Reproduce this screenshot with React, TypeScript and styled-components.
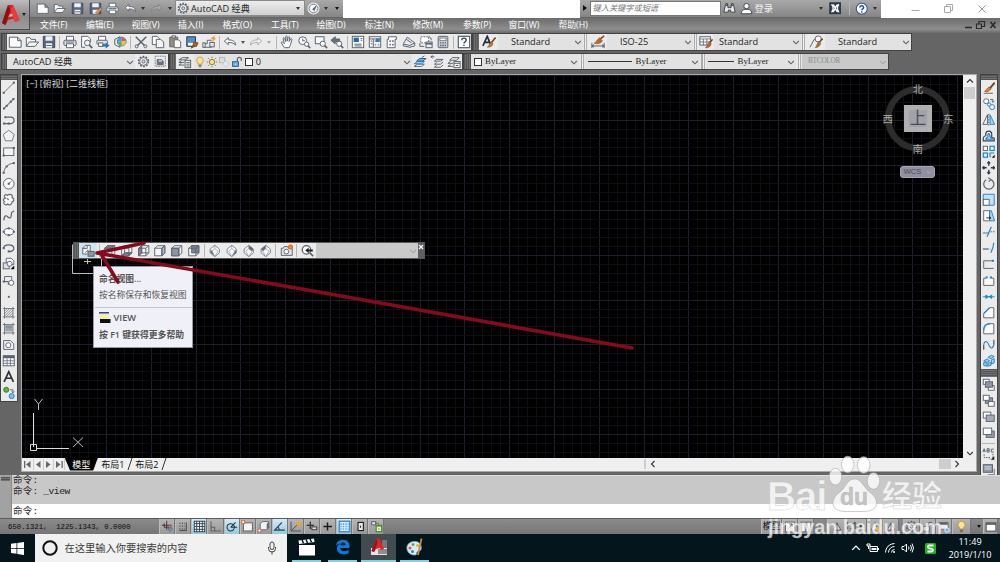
import React from "react";
import styled, { createGlobalStyle, css } from "styled-components";

const UI = `"Open Sans", "Noto Sans CJK SC", sans-serif`;
const INK = "#59626e";
const BLUE = "#2583c5";
const SKY = "#a9d4ee";

const Global = createGlobalStyle`
  * { box-sizing: border-box; }
  html, body { margin: 0; padding: 0; width: 1000px; height: 562px; overflow: hidden; background: #656565; }
  body { font-family: ${UI}; font-size: 9px; line-height: 1; color: #222; }
  svg { display: block; flex: none; }
`;

/* ---------- icons ---------- */

const cube = (face: string) => (
  <>
    <path d="M2 5 5.500 2H14v8.500L10.500 14H2z" fill="#f4f5f7" stroke={INK} />
    {face === "top" && <path d="M2 5 5.500 2H14l-3.500 3z" fill="#7b8490" />}
    {face === "bottom" && <path d="M2 14 5.500 10.500H14L10.500 14z" fill="#7b8490" />}
    {face === "left" && <path d="M2 5 5.500 2v8.500L2 14z" fill="#7b8490" />}
    {face === "right" && <path d="M10.500 5 14 2v8.500L10.500 14z" fill="#b4bac1" />}
    {face === "front" && <path d="M2 5h8.500v9H2z" fill="#8b949f" />}
    {face === "back" && <path d="M5.500 2H14v8.500H5.500z" fill="#7b8490" />}
    <path d="M2 5h8.500v9M10.500 5 14 2" />
    {(face === "bottom" || face === "left") && <path d="M5.500 2v8.500H14M5.500 10.500 2 14" />}
  </>
);

const iso = (d: string) => (
  <>
    <path d="M8 1.500 13.500 6v4.500L8 15 2.500 10.500V6z" fill="#f7f7f8" stroke="#7b838d" />
    <path d={d} fill="#5f6975" stroke="none" />
    <path d="M8 1.500v4L4.500 8.500 8 15l4-6.500L8 5.500" stroke="#8b939c" strokeWidth=".8" />
  </>
);

const node = (x: number, y: number, c = INK) => <rect x={x - 1.2} y={y - 1.2} width="2.4" height="2.4" fill={c} stroke="none" />;

const ICONS: Record<string, React.ReactNode> = {
  new: <path d="M1.500 2.500H11l4 4v7.500H1.500zM11 2.500v4h4" fill="#fafafa" />,
  open: <path d="M1.500 13V3h4l1.500 2h5v3M1.500 13 5 8h10.500l-4 5z" fill="#f4f6f8" />,
  save: <><path d="M1.500 1.500h13v13h-13z" fill="#58677d" stroke="#3b475a" /><path d="M4 1.500h8v5H4zM4.500 9.500h7v5h-7z" fill="#eef1f4" stroke="none" /><path d="M5 12h6" /></>,
  saveas: <><path d="M1.500 1.500h13v13h-13z" fill="#58677d" stroke="#3b475a" /><path d="M4 1.500h8v5H4zM4.500 9.500h7v5h-7z" fill="#eef1f4" stroke="none" /><path d="m8 13 6-6 2 2-5.500 5.500z" fill="#e59b3c" stroke="#8a5a20" strokeWidth=".7" /></>,
  print: <><path d="M4 6V1.500h8V6" fill="#fff" /><rect x="1" y="6" width="14" height="6" rx="1.500" fill="#dfe2e6" /><path d="M4 10h8v4.500H4z" fill="#fff" /><path d="M3 8h10" strokeWidth="1" /></>,
  preview: <><path d="M3 14V1.500h7l3 3V8M3 14h4" fill="#fff" /><circle cx="9.500" cy="9" r="3.200" fill="#eef4f8" /><path d="m12 11.500 3 3.500" strokeWidth="2" /></>,
  publish: <><path d="M3 6V1.500h8V6" fill="#fff" /><rect x="1" y="6" width="12" height="4.500" rx="1" fill="#dfe2e6" /><path d="M3 9h5v4H3z" fill="#fff" /><path d="M7 11h4V8.500l4.500 3.500-4.500 3.500V13H7z" fill="#1f73b8" stroke="none" /></>,
  dwf: <><path d="M2 5 8 2v12l-6-3z" fill="#e8ecf0" /><circle cx="10" cy="7.500" r="5" fill="#f5f5f5" stroke={INK} /><path d="M10 7.500V3a4.500 4.500 0 0 1 4.500 4.500z" fill="#e9564a" stroke="none" /><path d="M10 7.500h4.500A4.500 4.500 0 0 1 10 12z" fill="#f3c13b" stroke="none" /><path d="M10 7.500V12a4.500 4.500 0 0 1-4.500-4.500z" fill="#4bb35b" stroke="none" /><path d="M10 7.500H5.500A4.500 4.500 0 0 1 10 3z" fill="#3f9bd8" stroke="none" /></>,
  cut: <><path d="M2 2 12 12M14 2 4 12" strokeWidth="1.700" /><circle cx="3" cy="13" r="1.700" /><circle cx="13" cy="13" r="1.700" /></>,
  copy: <><path d="M1.500 1.500H7l2.500 2.500v7h-8z" fill="#fff" /><path d="M6 5h5l3.500 3v6.500H6z" fill="#f5f5f5" /></>,
  paste: <><path d="M2 2.500h9v11H2z" fill="#9b8d7b" /><path d="M4.500 1h4v2.500h-4z" fill="#ddd" /><path d="M7 5.500h5l2.500 2.500v6.500H7z" fill="#fafafa" /></>,
  match: <><path d="M2 2h10v11H2z" fill="#4f8fc9" stroke="#335" /><path d="M3.500 9h7v3h-7z" fill="#fff" stroke="none" /><path d="M10 8l5 1-2 4-4-1zM9 12l-2 3 4-2" fill="#b5622b" stroke="#8d4a1d" /></>,
  block: <><path d="M2 10h4V6h5M2 10v4h9v-3" /><rect x="1" y="9" width="2.500" height="5" fill="#fff" /><rect x="9" y="8.500" width="5" height="5" fill="#e8e8e8" /><path d="m14.500 1-4 3 3 .5-2 3 4-3.500-2.500-.5z" fill="#f2a530" stroke="#d98a1b" strokeWidth=".6" /></>,
  undo: <path d="M1.500 7 6 3v2.500c5 0 8 1.500 8.500 6C12 9 9.500 8.500 6 8.500V11z" fill="#f6f7f8" />,
  redo: <path d="M14.500 7 10 3v2.500c-5 0-8 1.500-8.500 6C4 9 6.500 8.500 10 8.500V11z" fill="#f1f1f1" stroke="#a4a8ad" />,
  titleRedo: <path d="M14.500 7 10 3v2.500c-5 0-8 1.500-8.500 6C4 9 6.500 8.500 10 8.500V11z" fill="#aaa" stroke="#7c7f83" />,
  pan: <path d="M5 14.500 1.500 9c-.5-1 1-1.500 2-.5L5 10 3.500 4c0-1.200 1.500-1.200 1.800 0L6.500 7.500V2c0-1.200 1.600-1.200 1.700 0v5L9.500 2.500c.5-1 1.800-.6 1.600.5l-.7 4.500 1.800-3c.8-.8 1.800-.2 1.500.8L12 11l-1.500 3.500z" fill="#fff" />,
  zoomrt: <><circle cx="6.500" cy="6.500" r="4.500" fill="#fff" /><path d="M6.500 4v2.500H9" /><circle cx="11" cy="10.500" r="2.500" fill="#fff" /><path d="m12.500 12 2.500 3" strokeWidth="1.800" /></>,
  zoomwin: <><rect x="1.500" y="2" width="10" height="8" fill="#f5f9fc" /><circle cx="10" cy="10" r="3" fill="#fff" /><path d="m12 12 3 3" strokeWidth="2" /></>,
  zoomprev: <><path d="M1 6 6 2v2.500h5v3H6V10z" fill="#66717d" /><circle cx="10.500" cy="10" r="3" fill="#fff" /><path d="m12.500 12 2.500 3" strokeWidth="1.800" /></>,
  props: <><rect x="1.500" y="1.500" width="13" height="13" fill="#fff" /><rect x="3" y="3" width="6" height="5" fill="#236aa5" stroke="none" /><path d="M4 10.500h8M4 12.500h8M11 4h2M11 6h2" /></>,
  dcenter: <><rect x="1.500" y="2" width="13" height="12" fill="#fff" /><path d="M1.500 4.500h13M6 4.500V14M3 7h2M3 10h2" /><path d="M7.500 6h2v2h-2zM11 6h2v2h-2zM7.500 10h2v2h-2zM11 10h2v2h-2z" fill="#8e99a5" stroke="none" /><rect x="9" y="4" width="4.500" height="4" fill="#3b79ad" stroke="none" /></>,
  palette: <><path d="M4 2h9v3h-1.500v9.500H2.500V5H4z" fill="#fff" /><path d="M5 6h2v2H5zM8 6h2v2H8zM5 10h2v2H5zM8 10h2v2H8z" fill="#778" stroke="none" /></>,
  sheet: <><path d="M1.500 10 6 2.500 10 5.500 14.500 9v3.500L9 14 1.500 12.500z" fill="#e8ebee" /><path d="M2 10.500 9 12l5.500-3M5 5l6 4" /></>,
  markup: <><rect x="2" y="2" width="9" height="7" strokeDasharray="2 1.200" fill="#fff" /><path d="M11 2c2 0 3 1.500 3 4M1 9v4h5" /><rect x="8" y="8" width="7" height="6.500" fill="#e7edf3" /><path d="M8 10h7" strokeWidth="1.800" /></>,
  calc: <><rect x="2.500" y="1.500" width="11" height="13" rx="1" fill="#cfd4da" /><rect x="4.500" y="3.500" width="7" height="3" fill="#fff" strokeWidth=".8" /><path d="M4.500 9h7M4.500 12h7" strokeDasharray="1.800 .9" strokeWidth="1.600" /></>,
  helpbox: <><rect x="1.500" y="1.500" width="13" height="13" fill="#fdfdfd" strokeWidth="1.400" /><path d="M5.500 6c0-3.300 5-3.300 5 0 0 1.800-2.500 1.800-2.500 3.800M8 11v1.700" stroke="#3a4350" strokeWidth="1.600" /></>,
  gear: <><circle cx="8" cy="8" r="6" strokeWidth="2" strokeDasharray="2.200 1.560" /><circle cx="8" cy="8" r="4.800" fill="#f4f4f4" /><circle cx="8" cy="8" r="2" fill="#d7d7d7" /></>,
  wsave: <><rect x="1.500" y="1.500" width="13" height="13" strokeDasharray="2 1" stroke="#6d747c" /><path d="M3.500 5h6l3 3v5h-9z" fill="#68717d" stroke="none" /><path d="M6 6h4v3H6z" fill="#b8bfc6" stroke="none" /></>,
  layers: <><path d="M1 5.500 5 3h7l-3.500 2.500zM1 8.500 4 6.500M1 8.500h6M1 11.500l3-2M1 11.500h6" /><rect x="8" y="6" width="6.500" height="8.500" fill="#e9edf0" /><path d="M9.500 8.500h4M9.500 10.500h4M9.500 12.500h4" strokeWidth="1" /></>,
  bulb: <><path d="M8 1.500a4.300 4.300 0 0 1 2.500 7.800V11h-5V9.300A4.300 4.300 0 0 1 8 1.500z" fill="#ffe58a" stroke="#b99437" /><path d="M6 12.500h4M6.500 14.300h3" stroke="#555" /></>,
  sun: <><circle cx="8" cy="8" r="3.500" fill="#ffe37a" stroke="#7d6a3a" /><path d="M8 1v2M8 13v2M1 8h2M13 8h2M3 3l1.500 1.500M11.500 11.500 13 13M3 13l1.500-1.500M11.500 4.500 13 3" stroke="#75684b" /></>,
  vpfreeze: <><rect x="2" y="2" width="7" height="7" stroke="#b0b0b0" fill="#ddd" /><circle cx="10.500" cy="10.500" r="3.500" stroke="#b4b4b4" strokeDasharray="1.500 1" fill="#e6e6e6" /></>,
  lock: <><rect x="2" y="7.500" width="8" height="6.500" fill="#5aa7dd" stroke="#2e5f86" /><path d="M8.500 7.500V4.300a2.600 2.600 0 0 1 5.200 0V6.500" strokeWidth="1.600" /><path d="M6 10v2" stroke="#fff" /></>,
  lay1: <><path d="M1.500 13 5 10.500h8L10 13z" fill="#fff" /><path d="M1.500 10 5 7.500h8L10 10z" fill={SKY} stroke={BLUE} /><path d="M4 7 7.500 4H15l-4 3z" fill="#6cb2e2" stroke="#265f8c" /><path d="m10 3 3-2" /></>,
  lay2: <><path d="M1 2h4M1 2l2-1.500M1 2l2 1.500" /><path d="M5 7 7.500 5H15l-3 2zM5 10.500l2.500-2M5 10.500h7l3-2.500M5 14l2.500-2M5 14h7l3-2.500" fill="none" /></>,
  lay3: <><path d="M3 6 6 3h8l-3 3zM1 9.500l3-2M1 9.500h6M1 13l3-2M1 13h6" /><rect x="8" y="7.500" width="7" height="7" fill="#f7f7f7" /><path d="M8 9.500h7M10 12h3" /></>,
  styleA: <><path d="m1 12.500 5-11 4.500 11M3 8.500h6" stroke="#26303c" strokeWidth="1.900" /><path d="m15.500 3-5 6" stroke="#7a4b25" strokeWidth="1.800" /><path d="m11 8 1.500 1.500c0 3-2.500 4.500-6.500 4.500 2.500-1.500 2.500-5 5-6z" fill="#c07a3c" stroke="#8b4d1f" strokeWidth=".6" /></>,
  styleDim: <><path d="M1 9v6M15 9v6M1 12.500h14M1 12.500l2.500-1.500M1 12.500 3.500 14M15 12.500 12.500 11M15 12.500 12.500 14" /><path d="m15 1-5 4" stroke="#7a4b25" strokeWidth="1.800" /><path d="m10 3 3 3.500c-1 3-5 4-9.500 3 2.500-1 3-4.500 6.500-6.500z" fill="#b86c33" stroke="#8b4d1f" strokeWidth=".6" /></>,
  styleTab: <><rect x="1" y="2" width="12" height="9.500" fill="#fff" /><path d="M1 4.500h12M1 8h12M5 4.500v7M9 4.500v7" strokeWidth=".9" /><path d="m15.500 5-3 3.500" stroke="#7a4b25" strokeWidth="1.800" /><path d="m12 7.500 2 2.500c-1 3.500-3.500 5-6.500 4.500 2-1.500 2-5 4.500-7z" fill="#b86c33" stroke="#8b4d1f" strokeWidth=".6" /></>,
  styleLead: <><path d="M1 14 6 5h3" /><circle cx="10.500" cy="4.500" r="3.500" fill="#fff" /><path d="m15.500 4-4 4.500" stroke="#7a4b25" strokeWidth="1.800" /><path d="m11.500 7 2 2.500c-1 3-3 5-6.500 5 2-1.500 2-5.500 4.500-7.500z" fill="#b86c33" stroke="#8b4d1f" strokeWidth=".6" /></>,
  compass: <><circle cx="8" cy="8" r="6.700" fill="#f3f5f7" stroke="#e2e6ea" strokeWidth="1.500" /><circle cx="8" cy="8" r="5.300" stroke="#6b747e" /><path d="m7 9 4-4-2 5.500z" fill={INK} /></>,
  binoc: <><path d="M3 4h3v3h4V4h3l2 8.500h-5.500V10h-3v2.500H1z" fill="#e9ebee" stroke="#333b46" /><path d="M3.500 2h2v2h-2zM10.500 2h2v2h-2z" fill="#d3d7db" stroke="#333b46" /></>,
  person: <><circle cx="8" cy="5" r="3.300" fill="#fff" stroke="#333b46" /><path d="M1.500 14.500c0-4 2.500-5 4.500-5.500h4c2 .5 4.500 1.500 4.500 5.500z" fill="#fff" stroke="#333b46" /></>,
  exch: <><rect x="1" y="1" width="14" height="14" fill="#2e3e50" stroke="#232f3d" /><path d="M3 3.500c3 0 3 9-0 9M13 3.500c-3 0-3 9 0 9M5 3.500c3 1 3 8 6 9M11 3.500c-3 1-3 8-6 9" stroke="#fff" strokeWidth="1.700" /></>,
  help: <><circle cx="8" cy="8" r="6.500" fill="#fff" stroke="#264f84" strokeWidth="1.200" /><path d="M5.800 6.500c0-3 4.400-2.800 4.400 0 0 1.500-2.200 1.700-2.200 3.300M8 11v1.600" stroke="#1d55a5" strokeWidth="1.800" /></>,

  line: <><path d="M2 14 14 2" strokeWidth="1" />{node(2, 14)}{node(14, 2)}</>,
  xline: <><path d="M1.500 14.500 14.500 1.500" strokeWidth="1.200" />{node(2.500, 13.500)}{node(13.500, 2.500)}{node(5.500, 10.500)}{node(10.500, 5.500)}</>,
  pline: <><path d="M3 12.500h7.500a3.800 3.800 0 0 0 0-7.600H5" strokeWidth="1.400" />{node(2.500, 12.500)}{node(4, 5)}{node(8, 12.500)}</>,
  polygon: <path d="m8 1.500 6.500 5L12 14H4L1.500 6.500z" fill="#f0f3f5" stroke="#717983" />,
  rect: <><rect x="2" y="3.500" width="12" height="9" fill="#f4f4f4" />{node(2, 12.500)}{node(14, 3.500)}</>,
  arc: <><path d="M2 14C2.500 8.500 7 3 14 2.500" />{node(2, 14)}{node(5.500, 6.500)}{node(14, 2.500)}</>,
  circle: <><circle cx="8" cy="8" r="6.300" fill="#f8f8f8" /><path d="m8 8 3-3" />{node(8, 8)}</>,
  revcloud: <path d="M4 6C1 3.500 4 .8 6.500 2.800 9 .5 13.500 2 12 5.500c3 1 2.500 4.500 0 5 0 3.500-4 4.500-5 2.500-2.500 2.500-6.500-.5-4-3C.8 9 1 6.500 4 6zM6 6.500 8 8" fill="#f6f6f6" stroke="#666e79" strokeWidth="1.400" />,
  spline: <path d="M2 13.500c1-7 3-6 5-4s4 1.500 4-2.500c0-2 1-4.500 3.500-4.500" strokeWidth="1.400" />,
  ellipse: <><ellipse cx="8" cy="8" rx="6" ry="4" fill="#fafafa" />{node(8, 4)}{node(2, 8)}{node(14, 8)}{node(8, 12)}</>,
  elarc: <><path d="M2 8.500c0-5 12-5.500 12 0 0 3-2.500 4-6 4" strokeWidth="1.400" />{node(8, 12.300)}{node(2, 8.500)}</>,
  insert: <><path d="M5 1.500h6l3 3V9H5z" fill="#fff" /><rect x="1.500" y="7" width="7" height="7" fill="#dde2e6" /><circle cx="9" cy="8" r="3" fill="#f4f4f4" /><path d="m14.500 10v4.500h-4.500z" fill="#111" stroke="none" /></>,
  mkblock: <><path d="M3 3h8.500v4M3 3v6h4" fill="#eee" /><circle cx="11" cy="10.500" r="3" fill="#fff" /><path d="M1.500 9h6v4" />{node(2, 9)}</>,
  point: <rect x="7" y="7" width="2.200" height="2.200" fill={INK} stroke="none" />,
  hatch: <><rect x="3" y="3" width="10" height="10" fill="#eee" stroke="#777e88" /><path d="m3 6 3-3M3 9l6-6M3 12l9-9M5 13l8-8M8 13l5-5M11 13l2-2M1 3h2M3 1v2M13 13h2M13 13v2M13 1v2h2M1 13h2v2" strokeWidth=".8" /></>,
  gradient: <><rect x="3" y="3" width="10" height="10" fill="#c9ced4" stroke="#777e88" /><path d="M4 4h8v4H4z" fill="#8a939d" stroke="none" /><path d="M4 9.500h8M1 3h2V1M13 1v2h2M1 13h2v2M13 15v-2h2" strokeWidth=".9" /></>,
  region: <><path d="M2 3h8l4 4v6.500H2z" fill="#f2f3f4" /><circle cx="7.500" cy="8.500" r="3" fill="#fff" /></>,
  table: <><rect x="1.500" y="2" width="13" height="12" fill="#fff" /><path d="M1.500 3.500h13" strokeWidth="3" /><path d="M1.500 8h13M1.500 11h13M6 5v9M10 5v9" strokeWidth=".9" /></>,
  mtext: <path d="M2.500 14 8 2l5.500 12M4.500 9.800h7" stroke="#2b323c" strokeWidth="2" />,
  addsel: <><circle cx="5" cy="4.500" r="3" fill="#65ae4a" stroke="#2f7a2a" /><path d="M9.500 4.500H13V8M11.500 6.500 13 8l1.500-1.500" /><circle cx="11.500" cy="12" r="3" fill="#7cc3f2" stroke="#2d79b5" /></>,

  erase: <><path d="m15 2-6 7" stroke="#6c4526" strokeWidth="2.200" /><path d="m8.500 7 2.500 2.500c-2 1-3 3-5.500 3.500L3 12c2-.5 3-4 5.500-5z" fill="#e37a35" stroke="#a3481a" strokeWidth=".8" /><path d="M2 14.500h11" /></>,
  copyobj: <><circle cx="5" cy="5" r="3" fill="#fff" /><path d="M9.500 3H13v3M11.800 5 13 6.500 14.300 5" /><circle cx="8.500" cy="9" r="2" stroke={BLUE} /><circle cx="12" cy="12" r="3" fill="#e5f2fa" stroke={BLUE} /></>,
  mirror: <><path d="M6.500 2v11.500H1z" fill="#f0f0f0" /><path d="M9.500 2v11.500H15z" fill={SKY} stroke={BLUE} /><path d="M8 1v14" strokeDasharray="2 1" /></>,
  offset: <><path d="M1.500 14h13v-3l-3-1V6a3.500 3.500 0 0 0-7 0v2c-2 0-3.500 2-3 6z" stroke="#38424e" fill="#f2f2f2" strokeWidth="1.400" /><path d="M4.500 12h8V11L9.500 9.500 9 6.500c0-1.500-2-1.500-2 0V9.500c-1 0-2 1-2.500 2.500z" stroke={BLUE} strokeWidth="1.500" /></>,
  array: <><rect x="1.500" y="1.500" width="5" height="5" fill="#fff" stroke={INK} /><rect x="9.500" y="1.500" width="5" height="5" fill="#e1f1fa" stroke={BLUE} strokeWidth="1.400" /><rect x="1.500" y="9.500" width="5" height="5" fill="#e1f1fa" stroke={BLUE} strokeWidth="1.400" /><path d="M9.500 14.500v-5h5" stroke={BLUE} strokeWidth="1.400" /><path d="M15 11.500V15h-3.500z" fill="#111" stroke="none" /></>,
  move: <path d="M8 1v4.500M8 10.500V15M1 8h4.500M10.500 8H15M6.300 2.800 8 1l1.700 1.800M6.300 13.200 8 15l1.700-1.800M2.800 6.300 1 8l1.800 1.700M13.200 6.300 15 8l-1.800 1.700" stroke="#303842" strokeWidth="1.600" />,
  rotate: <path d="M10 2.800a6 6 0 1 1-5 .5M7.500.800 10.500 3 8 5.500" strokeWidth="1.400" />,
  scale: <><path d="M1.500 1.500h13v13h-13z" fill="#bfe2f5" stroke={BLUE} /><rect x="1.500" y="7.500" width="7" height="7" fill="#fff" stroke={INK} /></>,
  stretch: <><path d="M2 2h7v12H2z" fill="#fff" /><path d="M9 2h2l4 12H9z" fill={SKY} stroke={BLUE} /><path d="M5 10.500h5M8.500 9l2 1.500-2 1.500" stroke="#222" /></>,
  trim: <><path d="M1 9.500h7" stroke={INK} /><path d="m6 14 5-12" stroke={BLUE} strokeWidth="1.400" /><path d="M10 8h5" stroke={BLUE} strokeDasharray="2 1" /></>,
  extend: <><path d="M1 9.500h6" stroke={INK} strokeWidth="1.500" /><path d="M7 9.500h3" stroke={BLUE} strokeDasharray="1.500 1" /><path d="M10.500 14c2-4 3-7 3.500-12" stroke={BLUE} strokeWidth="1.400" /></>,
  breakpt: <><path d="M13 4.500H2v9h12" />{node(13, 4.500, BLUE)}</>,
  brk: <><path d="M5 5H2v8.500h12V5h-3" fill="#fafafa" />{node(5.500, 4, BLUE)}{node(10.500, 4, BLUE)}</>,
  join: <><path d="M1 8h14" stroke={BLUE} /><path d="m4.500 6 3 2-3 2zM11.500 6l-3 2 3 2z" fill={BLUE} stroke={BLUE} /></>,
  chamfer: <><path d="M2 14V9l7-7h5v12z" fill="#fafafa" stroke={INK} /><path d="m2 9 7-7" stroke={BLUE} strokeWidth="1.500" /></>,
  fillet: <><path d="M2 14V10c0-5 3-8 8-8h4v12z" fill="#fafafa" stroke={INK} /><path d="M2 10c0-5 3-8 8-8" stroke={BLUE} strokeWidth="1.500" /></>,
  blend: <><path d="M2 14V8M14 8V2" strokeWidth="1.600" /><path d="M2 8c1-5 4-5 5.500-1s4.500 8 6.500 1" stroke={BLUE} strokeWidth="1.300" /></>,
  explode: <><path d="M2 8 6 6l3 2-3 2zM7 4l4-2.500L14.500 3l-4 2.500zM11 7l3.500-1.500v5L11 12zM2 10l4 1v3.500l-4-1zM7 11l3.500-1v3.500L7 14.500z" fill="#9fd0ee" stroke={BLUE} /></>,
  front: <><rect x="1.500" y="1.500" width="7" height="6" fill="#fff" /><rect x="7.500" y="9" width="7" height="5.500" fill="#fff" /><rect x="4" y="4.500" width="8.500" height="6.500" fill="#8d96a0" /></>,
  backo: <><rect x="4" y="4.500" width="8.500" height="6.500" fill="#8d96a0" /><rect x="1.500" y="1.500" width="7" height="6" fill="#fff" /><rect x="7.500" y="9" width="7" height="5.500" fill="#fff" /></>,
  above: <><rect x="1.500" y="2.500" width="9" height="7" fill="#fff" /><rect x="5" y="6" width="9.500" height="7.500" fill="#a4abb4" /></>,
  under: <><rect x="5" y="6" width="9.500" height="7.500" fill="#949ca6" /><rect x="1.500" y="2.500" width="10" height="7.500" fill="#fff" /></>,
  annot: <><path d="m1 6 1.500-4L4 6M1.500 5h2M6 2v4h2.500V2zM6 4h2.500M14 2.500h-3V6h3" strokeWidth="1.100" /><path d="M2.500 8.500v4h7v2M13 8v6" strokeDasharray="2 1" /><path d="M14.500 11v4h-4z" fill="#111" stroke="none" /></>,
  hatchback: <><rect x="1.500" y="2" width="11" height="9" fill="#8f99a4" /><path d="M3 4.500h8M3 7h8" stroke="#dfe4e8" /><path d="M14.500 7v7H7" /></>,

  named: <><path d="M5 1.500h5.500V8M5 1.500 2 4.500v7h5M7 1.500v3.500H2" fill="#fff" /><rect x="8" y="8.500" width="7" height="5.500" fill="#8d97a1" /><path d="m5 10 3-3" /></>,
  vtop: cube("top"), vbottom: cube("bottom"), vleft: cube("left"), vright: cube("right"), vfront: cube("front"), vback: cube("back"),
  sw: iso("M3 6.500 5 8.500 8 14.500 3 10.500z"), se: iso("M13 6.500 11.500 8.500 8 14.500 13 10.500z"), ne: iso("M8 1.500 13.500 6 12 9 8 5.500z"), nw: iso("M8 1.500 2.500 6 4.500 8.500 8 5.500z"),
  camera: <><path d="M1.500 5H4l1-2h4l1 2h4.500v8.500h-13z" fill="#e2e5e8" /><circle cx="7.500" cy="9" r="2.800" fill="#fff" /><circle cx="12.500" cy="3.500" r="2.500" fill="#ee8a2a" stroke="#d06c12" /></>,
  orbit: <><circle cx="6.500" cy="7" r="5" fill="#fafafa" strokeWidth="1.500" /><path d="m5 7.500 4-3V6.500h5v2.500H9v2z" fill="#222" stroke="none" /><path d="m10.500 10.500 4 4" strokeWidth="2" /></>,

  sInfer: <><path d="M7 1v11M1 6.500h12M4 4v5h6" stroke="#333" /><circle cx="10.500" cy="9" r="2.200" stroke="#c4443c" /><circle cx="11.500" cy="11.500" r="2.300" stroke="#2d79c5" /></>,
  sSnap: <><path d="M3 4h7M3 7.500h7M3 11h7" stroke="#333" strokeDasharray="1.500 1.500" /><path d="M11.500 3v10H3" stroke="#444" /></>,
  sGrid: <><rect x="1.500" y="1.500" width="13" height="13" fill="#eef6fa" stroke="#222c36" /><path d="M4.500 1.500v13M8 1.500v13M11.500 1.500v13M1.500 4.500h13M1.500 8h13M1.500 11.500h13" stroke="#333d48" /></>,
  sOrtho: <path d="M2.500 1.500v12h12M2.500 9H7v4.500" stroke="#5c6269" strokeWidth="1.300" />,
  sPolar: <><circle cx="7" cy="9" r="4.500" stroke="#1c3543" strokeWidth="1.300" /><path d="M7 9h8M7 9l6-6" stroke="#1c3543" strokeWidth="1.300" /></>,
  sOsnap: <><rect x="3" y="3.500" width="11" height="10" fill="#f4f4f4" stroke="#666" strokeWidth="1.200" /><rect x="1" y="1" width="3.500" height="3.500" fill="#fff" stroke="#e0672a" /></>,
  s3d: <><path d="M4 4.500 7 2h7.500v7.500L12 12H4z" fill="#f3f3f5" stroke="#666f80" strokeWidth="1.200" /><path d="M12 5v7l2.500-2.500V2z" fill="#59647c" stroke="none" /><circle cx="3" cy="13" r="1.800" fill="#fff" stroke="#e0672a" /></>,
  sTrack: <path d="M14.500 12.500H2L11 3M7.500 12.500c0-2-.5-3-1.500-4.500" stroke="#26414f" strokeWidth="1.400" />,
  sDucs: <><path d="M2.500 2v11.500h12M2.500 13.500 10 6" stroke="#4c4c4c" /><path d="m12 1 1.200 2.500L16 4l-2 2 .5 2.500L12 7l-2.500 1.500L10 6 8.500 4l2.500-.5z" fill="#f5a324" stroke="none" /></>,
  sDyn: <><path d="M6.500 2v9M2 6.500h9" stroke="#333" strokeWidth="1.600" /><rect x="8.500" y="8.500" width="6" height="3.500" fill="#ddd" stroke="#333" /></>,
  sLwt: <path d="M8 3v10M3 8h10.500" stroke="#1b1b1b" strokeWidth="1.800" />,
  sTpy: <><rect x="1.500" y="1.500" width="13" height="13" fill="#d4eafa" stroke="#2f88c9" strokeWidth="1.600" /><path d="M3 5h10M3 8h10M3 11h10" stroke="#57a5dd" strokeDasharray="1.500 1.500" strokeWidth="2" /></>,
  sQp: <><rect x="5" y="3" width="6.500" height="10" fill="#ececec" stroke="#222" strokeWidth="1.400" /><path d="M8 7v2.500" stroke="#222" strokeWidth="1.400" /></>,
  sSc: <><path d="M2 2h5v4H2zM7 4h3v4" stroke="#555" fill="#ddd" /><rect x="7.500" y="6.500" width="7" height="8" fill="#76bb4a" stroke="#3c7c22" /><rect x="9" y="9" width="4" height="4" fill="#a7db7d" stroke="#eee" /></>,
  pModel: <><path d="M2 1.500h12v13H2z" fill="#f7f7f7" stroke="#555" /><path d="m5 11 6-7M7 4h4v4" stroke="#444" /></>,
  pLayout: <><rect x="1.500" y="1.500" width="5.500" height="13" fill="#f7f7f7" stroke="#555" /><rect x="9" y="1.500" width="5.500" height="13" fill="#f7f7f7" stroke="#555" /></>,
  ascale: <><path d="M8 2v12M8 3 3 12h10z" fill="#e8e8e8" stroke="#4b4f55" /></>,
  ascaleSun: <><path d="M8 2 3 12h9z" fill="#e8e8e8" stroke="#4b4f55" /><circle cx="12" cy="10.500" r="3" fill="#f7b23b" stroke="none" /></>,
  ulock: <><rect x="2" y="7.500" width="8" height="6" fill="#ddd" /><path d="M8.500 7.500V4.300a2.600 2.600 0 0 1 5.200 0V7" strokeWidth="1.500" /></>,
  hw: <><path d="M1.500 2h12v9h-12z" fill="#eceff2" /><path d="M2 3.500h11" strokeWidth="3" /><circle cx="12" cy="12" r="3" fill="#6db4e8" stroke="#fff" /></>,
  clean: <><rect x="1.500" y="2.500" width="13" height="11" fill="#fff" stroke="#42464b" strokeWidth="1.300" /><path d="M1.500 4h13" stroke="#42464b" strokeWidth="2" /></>,
};

const IconSvg = styled.svg`
  fill: none;
  stroke: ${INK};
  stroke-width: 1.1;
`;
const Icon = ({ n, s = 14 }: { n: string; s?: number }) => (
  <IconSvg width={s} height={s} viewBox="0 0 16 16">{ICONS[n]}</IconSvg>
);

const Slot = styled.span<{ $w?: number; $h?: number; $on?: boolean }>`
  flex: none;
  display: flex;
  align-items: center;
  justify-content: center;
  width: ${p => p.$w ?? 16.85}px;
  height: ${p => (p.$h ? p.$h + "px" : "100%")};
  background: ${p => (p.$on ? "#cfe4f1" : "transparent")};
`;
const Caret = styled.i<{ $c?: string }>`
  border: 2.200px solid transparent;
  border-top: 3px solid ${p => p.$c ?? "#333"};
  border-bottom: 0;
`;
const Chevron = ({ dir = "down", c = "#666", s = 8 }: { dir?: "down" | "up" | "left" | "right"; c?: string; s?: number }) => {
  const d = { down: "M1.200 3l2.800 2.800L6.800 3", up: "M1 5.500l3-3 3 3", left: "M5.500 1l-3 3 3 3", right: "M2.500 1l3 3-3 3" }[dir];
  return <svg width={s} height={s} viewBox="0 0 8 8" fill="none" stroke={c} strokeWidth="1.100"><path d={d} /></svg>;
};
const Gap = styled.span<{ $w: number }>`
  flex: none;
  width: ${p => p.$w}px;
`;
const Grow = styled.span`flex: 1;`;

/* ---------- window chrome ---------- */

const Screen = styled.div`
  position: relative;
  width: 1000px;
  height: 562px;
  overflow: hidden;
  display: flex;
  flex-direction: column;
  background: #656565;
`;
const TopArea = styled.header`
  position: relative;
  height: 33px;
  flex: none;
`;
const AppButton = styled.div`
  position: absolute;
  left: 0;
  top: 0;
  width: 30px;
  height: 30px;
  display: flex;
  align-items: center;
  padding-left: 2px;
  background: linear-gradient(#bdbdbd, #8b8b8b 55%, #9d9d9d);
  border: 1px solid #4c4c4c;
  border-left: 0;
  border-top: 0;
`;
const TitleBar = styled.div`
  display: flex;
  height: 17.500px;
  background: #fff;
`;
const TitlePart = styled.div<{ $w: number; $pl?: number }>`
  flex: none;
  display: flex;
  align-items: center;
  width: ${p => p.$w}px;
  padding-left: ${p => p.$pl ?? 0}px;
  background: linear-gradient(#a9a9a9, #858585);
  border-bottom: 1px solid #666;
`;
const WorkspaceBox = styled.div`
  width: 131px;
  height: 16px;
  display: flex;
  align-items: center;
  gap: 1.500px;
  padding: 0 4px 0 1.500px;
  background: linear-gradient(#ededed, #cfcfcf);
  border: 1px solid #8a8a8a;
  font-size: 9.100px;
  color: #1d1d1d;
`;
const SearchField = styled.div`
  width: 131px;
  height: 15px;
  padding-left: 2px;
  display: flex;
  align-items: center;
  background: #fdfdfd;
  border: 1px solid #777;
  font-size: 8.200px;
  font-style: italic;
  color: #777;
`;
const SignIn = styled.span`
  width: 64px;
  font-size: 9.300px;
  color: #f3f3f3;
`;
const WinButtons = styled.div`
  flex: 1;
  display: flex;
  align-items: center;
  padding-left: 29px;
  gap: 21.500px;
`;
const MenuBar = styled.nav`
  height: 15.500px;
  display: flex;
  align-items: center;
  padding-left: 40px;
  background: linear-gradient(#6c6c6c, #8e8e8e 75%, #6a6a6a);
`;
const MenuItem = styled.span<{ $w: number }>`
  flex: none;
  width: ${p => p.$w}px;
  font-size: 8.800px;
  color: #fff;
  white-space: nowrap;
`;

/* ---------- toolbars ---------- */

const BarRow = styled.div<{ $h: number; $mt?: number }>`
  flex: none;
  display: flex;
  height: ${p => p.$h}px;
  margin-top: ${p => p.$mt ?? 0}px;
  padding-left: 1px;
`;
const barFrame = css`
  background: #ebebeb;
  border: 1px solid #424242;
`;
const Bar = styled.div<{ $w: number }>`
  ${barFrame}
  flex: none;
  display: flex;
  align-items: center;
  width: ${p => p.$w}px;
`;
const Grip = styled.span<{ $light?: boolean; $w?: number }>`
  flex: none;
  align-self: stretch;
  width: ${p => p.$w ?? 6}px;
  background: ${p => (p.$light ? "linear-gradient(90deg, #e8e8e8 25%, #a9a9a9 25% 45%, #efefef 45% 65%, #b1b1b1 65% 80%, #e8e8e8 80%)" : "repeating-linear-gradient(90deg, #555 0 1px, #6d6d6d 1px 2px)")};
`;
const Sep = styled.i`
  flex: none;
  width: 1px;
  height: 13px;
  margin: 0 1.600px;
  background: #b5b5b5;
`;
const Combo = styled.div<{ $w: number; $pl?: number; $off?: boolean; $serif?: boolean }>`
  flex: none;
  display: flex;
  align-items: center;
  width: ${p => p.$w}px;
  height: 100%;
  padding: 0 1px 0 ${p => p.$pl ?? 5}px;
  background: ${p => (p.$off ? "#c9c9c9" : "#e2e2e2")};
  color: ${p => (p.$off ? "#8b8b8b" : "#1e1e1e")};
  font-size: 9.200px;
  white-space: nowrap;
  ${p => p.$serif && css`font-family: "Liberation Serif", serif; font-size: 8.900px;`}
`;
const SmallCaps = styled.span`
  font-size: 7.200px;
  letter-spacing: -.2px;
`;
const Swatch = styled.i`
  width: 8px;
  height: 8px;
  margin-right: 3px;
  background: #fff;
  border: 1px solid #333;
`;
const LineSample = styled.i<{ $w: number }>`
  width: ${p => p.$w}px;
  height: 1px;
  margin-right: 3.500px;
  background: #333;
`;

const Tools = ({ items, s = 14 }: { items: string; s?: number }) => (
  <>
    {items.split(" ").map((n, i) =>
      n === "|" ? <Sep key={i} />
        : n === "v" ? <Slot key={i} $w={9.700}><Caret $c="#555" /></Slot>
          : n === "w" ? <Slot key={i} $w={9.700}><Caret $c="#aaa" /></Slot>
            : <Slot key={i}><Icon n={n} s={s} /></Slot>
    )}
  </>
);

const Side = styled.aside<{ $h?: number }>`
  ${barFrame}
  width: 18px;
  height: ${p => p.$h ?? 328}px;
  display: flex;
  flex-direction: column;
  align-items: center;
  flex: none;
  overflow: hidden;
`;
const SideGrip = styled.span<{ $h?: number }>`
  display: block;
  width: 100%;
  height: ${p => p.$h ?? 5}px;
  flex: none;
  background: repeating-linear-gradient(#555 0 1px, #707070 1px 2px);
`;
const HSep = styled.i`
  width: 13px;
  height: 1px;
  margin: 2px 0;
  flex: none;
  background: #b5b5b5;
`;
const SideTools = ({ items }: { items: string }) => (
  <>
    {items.split(" ").map((n, i) => n === "|" ? <HSep key={i} /> : <Slot key={i} $w={16} $h={16.070}><Icon n={n} s={13.500} /></Slot>)}
  </>
);

/* ---------- drawing area ---------- */

const Main = styled.main`
  flex: none;
  display: flex;
  height: 402px;
  margin-top: 3.500px;
  justify-content: space-between;
  padding-right: 2.500px;
`;
const DocWindow = styled.section`
  width: 956px;
  height: 398px;
  margin-left: 3px;
  margin-right: 2px;
  border: 1px solid #a9a9a9;
  border-width: 1.500px 1px 1px 1.500px;
  display: flex;
  flex-direction: column;
  background: #f0f0f0;
`;
const ViewRow = styled.div`
  display: flex;
  flex: 1;
  min-height: 0;
`;
const Canvas = styled.div`
  position: relative;
  flex: 1;
  background: #000;
  overflow: hidden;
`;
const ScrollV = styled.div`
  width: 13px;
  flex: none;
  display: flex;
  flex-direction: column;
  align-items: center;
  padding: 2px 0 1px;
  background: #f0f0f0;
`;
const Thumb = styled.i<{ $w: number; $h: number; $mt?: number }>`
  width: ${p => p.$w}px;
  height: ${p => p.$h}px;
  margin-top: ${p => p.$mt ?? 0}px;
  background: #cdcdcd;
`;
const TabRow = styled.div`
  flex: none;
  height: 12.500px;
  display: flex;
  align-items: center;
  padding-left: 1px;
  background: #efefef;
  color: #111;
  font-size: 9px;
`;
const NavBtn = styled.span`
  width: 10.400px;
  height: 11px;
  display: flex;
  align-items: center;
  justify-content: center;
  border-right: 1px solid #ccc;
`;
const ModelTab = styled.span`
  width: 33px;
  height: 12.500px;
  display: flex;
  align-items: center;
  justify-content: center;
  background: #000;
  color: #fff;
  clip-path: polygon(0 0, 100% 0, 86% 100%, 16% 100%);
`;
const LayoutTab = styled.span`
  width: 26px;
  white-space: nowrap;
`;
const ViewLabel = styled.span`
  position: absolute;
  left: 4px;
  top: 4px;
  font: 8.900px ${UI};
  line-height: 10px;
  letter-spacing: .1px;
  color: #ddd;
  white-space: nowrap;
`;
const Overlay = styled.svg`
  position: absolute;
  left: 0;
  top: 0;
`;
const InkOverlay = styled(Overlay)`z-index: 5;`;
const CubeLabel = styled.span<{ $x: number; $y: number }>`
  position: absolute;
  left: ${p => p.$x - 6}px;
  top: ${p => p.$y - 6}px;
  width: 12px;
  line-height: 12px;
  font-size: 10.500px;
  text-align: center;
  color: #aaa;
`;
const CubeFace = styled.div`
  position: absolute;
  left: 882px;
  top: 30px;
  width: 27.500px;
  height: 27.500px;
  display: flex;
  align-items: center;
  justify-content: center;
  background: #a0a3aa;
  border: 5px solid #b0b0b0;
  font-size: 16.500px;
  color: #4a4d54;
`;
const Wcs = styled.div`
  position: absolute;
  left: 877.500px;
  top: 91px;
  width: 35px;
  height: 12px;
  display: flex;
  align-items: center;
  gap: 5px;
  padding-left: 3px;
  border-radius: 3px;
  background: #9090a0;
  border: 1px solid #a5a5b2;
  font: 7.500px "Liberation Sans", sans-serif;
  color: #4b4b55;
`;

const FloatBar = styled.div`
  position: absolute;
  z-index: 2;
  left: 73px;
  top: 242px;
  width: 351.500px;
  height: 17px;
  display: flex;
  align-items: center;
  background: #ebebeb;
  border: 1px solid #5b5b5b;
`;
const FloatClose = styled.span`
  width: 6px;
  align-self: stretch;
  padding-top: 1px;
  background: #5f5f5f;
`;
const Tip = styled.div`
  position: absolute;
  z-index: 3;
  left: 93px;
  top: 266px;
  width: 99.500px;
  height: 81.500px;
  padding: 7px 0 0 5px;
  background: #f0f1f8;
  border: 1px solid #9a9aa6;
  color: #555;
  white-space: nowrap;
`;
const TipLine = styled.div<{ $h: number; $bold?: boolean; $s?: number }>`
  display: flex;
  align-items: center;
  gap: 3px;
  height: ${p => p.$h}px;
  font-size: ${p => p.$s ?? 8.750}px;
  font-weight: ${p => (p.$bold ? 600 : 400)};
`;
const TipRule = styled.div`
  height: 1px;
  margin: 0 0 4px -4px;
  background: #c5c5cc;
`;

/* ---------- command line, status, taskbar ---------- */

const Command = styled.section`
  flex: none;
  height: 43.500px;
  display: flex;
  margin-top: -1px;
`;
const CommandGrip = styled.div`
  width: 12px;
  padding: 2px 1px;
  background: #a2a2a2;
  border-right: 1px solid #8a8a8a;
`;
const CommandBody = styled.div`
  flex: 1;
  display: flex;
  flex-direction: column;
  background: #c8c8c8;
  border-top: 1px solid #dedede;
`;
const CommandText = styled.div<{ $h: number; $input?: boolean }>`
  display: flex;
  align-items: center;
  height: ${p => p.$h}px;
  padding-left: 1px;
  color: #222;
  font: 9.600px "Liberation Mono", "Noto Sans CJK SC", monospace;
  line-height: 10px;
  letter-spacing: -.45px;
  white-space: pre;
  ${p => p.$input && css`background: #fff; margin-top: 6px; padding-top: 3px;`}
`;
const Cjk = styled.span`letter-spacing: .2px;`;
const Status = styled.footer`
  flex: none;
  height: 16px;
  display: flex;
  align-items: center;
  background: linear-gradient(#8b8b8b, #757575);
  border-top: 1px solid #5c5c5c;
`;
const Coords = styled.span`
  width: 159.300px;
  padding-left: 8px;
  font: 7.300px "Liberation Mono", monospace;
  color: #0c0c0c;
  white-space: pre;
`;
const Toggle = styled.span<{ $on?: boolean; $w?: number }>`
  flex: none;
  width: ${p => p.$w ?? 16.070}px;
  height: 15px;
  display: flex;
  align-items: center;
  justify-content: center;
  background: ${p => (p.$on ? "linear-gradient(#d3edf7, #97cadb)" : "linear-gradient(#b5b5b5, #999)")};
  border-right: 1px solid #777;
  border-left: 1px solid #bbb;
  font-size: 8.800px;
  white-space: nowrap;
  color: #111;
`;
const Taskbar = styled.div`
  flex: 1;
  display: flex;
  background: #04151b;
`;
const Start = styled.div`
  width: 35px;
  display: flex;
  align-items: center;
  justify-content: center;
`;
const TaskSearch = styled.div`
  width: 252px;
  display: flex;
  align-items: center;
  padding: 0 10px 0 7px;
  background: #f1f1f1;
  font-size: 10.250px;
  color: #3b3b3b;
`;
const TaskText = styled.span`
  flex: 1;
  padding-left: 6.500px;
`;
const TaskApp = styled.div<{ $w: number; $ml: number; $on?: boolean }>`
  width: ${p => p.$w}px;
  margin-left: ${p => p.$ml}px;
  display: flex;
  align-items: center;
  justify-content: center;
  background: ${p => (p.$on ? "#414b50" : "transparent")};
  border-bottom: 2px solid #83d2e4;
`;
const Tray = styled.div`
  display: flex;
  align-items: center;
  gap: 5px;
`;
const Clock = styled.div`
  width: 46px;
  margin: 1px 7px 0 11.500px;
  text-align: center;
  line-height: 13.300px;
  font-size: 9.100px;
  color: #fff;
`;

/* ---------- watermark ---------- */

const Mark = styled.div`
  position: absolute;
  z-index: 6;
  left: 766px;
  top: 455px;
  width: 184px;
  height: 92px;
  color: rgba(255, 255, 255, .76);
  font-family: "Liberation Sans", "Noto Sans CJK SC", sans-serif;
  font-weight: 700;
  -webkit-text-stroke: .5px rgba(170, 170, 170, .6);
  white-space: nowrap;
`;
const MarkText = styled.span<{ $x: number; $y: number; $s: number; $dark?: boolean; $ls?: number }>`
  position: absolute;
  left: ${p => p.$x}px;
  top: ${p => p.$y}px;
  font-size: ${p => p.$s}px;
  line-height: 1;
  letter-spacing: ${p => p.$ls ?? 0}px;
  ${p => p.$dark && css`color: #c4c4c4;`}
`;

const MENUS: [string, number][] = [
  ["文件(F)", 46], ["编辑(E)", 45.500], ["视图(V)", 46.500], ["插入(I)", 44.500], ["格式(O)", 48.500], ["工具(T)", 45.500],
  ["绘图(D)", 48], ["标注(N)", 48], ["修改(M)", 50.500], ["参数(P)", 45.500], ["窗口(W)", 50], ["帮助(H)", 40],
];

const GridLines = () => {
  const lines: React.ReactNode[] = [];
  for (let i = 0; i < 108; i++) {
    const x = Math.round(-5.700 + i * 8.960) + 0.5;
    lines.push(<path key={"x" + i} d={`M${x} 0V384`} stroke={i % 5 === 0 ? "#1d1f2f" : "#0e0f15"} />);
  }
  for (let i = 0; i < 46; i++) {
    const y = Math.round(0.300 + i * 8.970) + 0.5;
    lines.push(<path key={"y" + i} d={`M0 ${y}H942`} stroke={i % 5 === 0 ? "#1d1f2f" : "#0e0f15"} />);
  }
  return <Overlay width="942" height="384">{lines}</Overlay>;
};

const TabSlash = () => <svg width="6" height="12" stroke="#333" fill="none"><path d="M5 0 1 12" /></svg>;

const STATUS = ["sInfer", "sSnap", "sGrid", "sOrtho", "sPolar", "sOsnap", "s3d", "sTrack", "sDucs", "sDyn", "sLwt", "sTpy", "sQp", "sSc"];
const STATUS_ON = [2, 4, 7, 11];

export default function App() {
  return (
    <Screen>
      <Global />
      <TopArea>
        <TitleBar>
          <TitlePart $w={343} $pl={33.500}>
            {["new", "open", "save", "saveas", "print", "undo"].map(n => <Slot key={n} $w={17.600}><Icon n={n} s={13} /></Slot>)}
            <Slot $w={8}><Caret /></Slot>
            <Slot $w={18.500}><Icon n="titleRedo" s={13} /></Slot>
            <Slot $w={8}><Caret /></Slot>
            <Gap $w={1} />
            <WorkspaceBox><Icon n="gear" s={12.500} />AutoCAD 经典<Grow /><Caret /></WorkspaceBox>
            <Slot $w={16}><Icon n="compass" s={13} /></Slot>
            <Slot $w={9}><Caret /></Slot>
            <Slot $w={13}><Caret $c="#111" /></Slot>
          </TitlePart>
          <Gap $w={236.500} />
          <TitlePart $w={301} $pl={3}>
            <svg width="4" height="6"><path d="M0 0l4 3-4 3z" fill="#111" /></svg>
            <Gap $w={3} />
            <SearchField>键入关键字或短语</SearchField>
            <Slot $w={17}><Icon n="binoc" s={13} /></Slot>
            <Slot $w={17}><Icon n="person" s={13} /></Slot>
            <SignIn>登录</SignIn>
            <Caret />
            <Slot $w={25}><Icon n="exch" s={12.500} /></Slot>
            <Sep />
            <Slot $w={21}><Icon n="help" s={13.500} /></Slot>
            <Caret />
          </TitlePart>
          <WinButtons>
            <svg width="12" height="12"><path d="M1.500 7.500h8" stroke="#aaa" /></svg>
            <svg width="12" height="12" fill="none" stroke="#aaa"><path d="M1.500 3.500h6v6h-6zM3.500 3.500v-2h6v6h-2" /></svg>
            <svg width="12" height="12" stroke="#999"><path d="M1.500 2.500l7 7M8.500 2.500l-7 7" /></svg>
          </WinButtons>
        </TitleBar>
        <MenuBar>
          {MENUS.map(([t, w]) => <MenuItem key={t} $w={w}>{t}</MenuItem>)}
          <Grow />
          <svg width="36" height="10" fill="none" stroke="#2c2c2c" strokeWidth="1.200">
            <path d="M1 7.500h7" strokeWidth="1.600" />
            <path d="M12.500 4h5v4.500h-5zM15 4V1.500h5.500V6.500h-3" />
            <path d="M26.500 2l5 6M31.500 2l-5 6" strokeWidth="1.600" />
          </svg>
        </MenuBar>
        <AppButton>
          <svg width="20" height="24" viewBox="0 0 20 24">
            <path d="M6 2h5l6.500 15-4.500 2-1-3.500-6 1.500L3.500 22 0 20z" fill="#d5222a" />
            <path d="M6 2 0 20l3.500 2L8.500 7z" fill="#8f0f16" />
            <path d="M11 2 8.500 7l3.500 9 1 3 4.500-2z" fill="#ee3a3c" />
            <path d="M7.500 11.500 6.500 14l4.500-.8-1-2.700z" fill="#b9b9b9" />
          </svg>
          <Caret $c="#222" />
        </AppButton>
      </TopArea>

      <BarRow $h={18}>
        <Bar $w={471}>
          <Grip $w={4.500} />
          <Tools items="new open save | print preview publish dwf | cut copy paste match block | undo v redo w | pan zoomrt zoomwin zoomprev | props dcenter palette sheet markup calc | helpbox" />
        </Bar>
        <Bar $w={439.500}>
          <Grip $w={6} />
          <Slot $w={19}><Icon n="styleA" /></Slot>
          <Combo $w={85} $pl={13}>Standard<Grow /><Chevron /></Combo>
          <Grip $light $w={5} />
          <Slot $w={19}><Icon n="styleDim" /></Slot>
          <Combo $w={86} $pl={13}>ISO-25<Grow /><Chevron /></Combo>
          <Grip $light $w={5} />
          <Slot $w={16}><Icon n="styleTab" /></Slot>
          <Combo $w={87} $pl={5}>Standard<Grow /><Chevron /></Combo>
          <Grip $light $w={5} />
          <Slot $w={19}><Icon n="styleLead" /></Slot>
          <Combo $w={85.500} $pl={13}>Standard<Grow /><Chevron /></Combo>
        </Bar>
      </BarRow>

      <BarRow $h={17} $mt={2}>
        <Bar $w={168}>
          <Grip $w={5} />
          <Combo $w={128} $pl={6}>AutoCAD 经典<Grow /><Chevron /></Combo>
          <Slot><Icon n="gear" s={13} /></Slot>
          <Slot><Icon n="wsave" s={12.500} /></Slot>
        </Bar>
        <Bar $w={294}>
          <Grip $w={6} />
          <Slot $w={18}><Icon n="layers" /></Slot>
          <Combo $w={218} $pl={0}>
            {["bulb", "sun", "vpfreeze", "lock"].map(n => <Slot key={n} $w={12.200}><Icon n={n} s={12} /></Slot>)}
            <Gap $w={2} />
            <Swatch />0<Grow /><Chevron />
          </Combo>
          <Tools items="lay1 lay2 lay3" />
        </Bar>
        <Bar $w={426}>
          <Grip $w={7} />
          <Combo $w={108} $pl={3} $serif><Swatch />ByLayer<Grow /><Chevron /></Combo>
          <Grip $light />
          <Combo $w={115} $pl={3} $serif><LineSample $w={44} />ByLayer<Grow /><Chevron /></Combo>
          <Grip $light />
          <Combo $w={90} $pl={2} $serif><LineSample $w={26} />ByLayer<Grow /><Chevron /></Combo>
          <Grip $light />
          <Combo $w={86} $pl={6} $off $serif><SmallCaps>BTCOLOR</SmallCaps><Grow /><Chevron c="#aaa" /></Combo>
        </Bar>
      </BarRow>

      <Main>
        <Side $h={328.500}>
          <SideGrip />
          <SideTools items="line xline pline polygon rect arc circle revcloud spline ellipse elarc insert mkblock point hatch gradient region table mtext addsel" />
        </Side>
        <DocWindow>
          <ViewRow>
            <Canvas>
              <GridLines />
              <ViewLabel>[−] [俯视] [二维线框]</ViewLabel>
              <Overlay width="942" height="384" fill="none">
                <circle cx="895.500" cy="43.500" r="29.300" stroke="#2c2c2c" strokeWidth="6.500" />
                <path d="M11.500 338v34M15 373.500h32" stroke="#ddd" />
                <path d="M8.500 369.500h6v6h-6z" stroke="#ddd" />
                <path d="M12.500 324l4 5 4-5M16.500 329v6M51 362.500l10 9.500M61 362.500l-10 9.500" stroke="#bbb" />
                <path d="M50.500 169.500v29h29v-29M65.500 184v5M62 186.500h7" stroke="#bdbdbd" />
              </Overlay>
              <CubeLabel $x={895.500} $y={14}>北</CubeLabel>
              <CubeLabel $x={895.500} $y={74.500}>南</CubeLabel>
              <CubeLabel $x={865.500} $y={44}>西</CubeLabel>
              <CubeLabel $x={926} $y={44}>东</CubeLabel>
              <CubeFace>上</CubeFace>
              <Wcs>WCS<Chevron s={6} c="#b5b5c0" /></Wcs>
            </Canvas>
            <ScrollV>
              <Chevron dir="up" c="#333" />
              <Thumb $w={11} $h={12} $mt={2} />
              <Grow />
              <Chevron c="#333" />
            </ScrollV>
          </ViewRow>
          <TabRow>
            <NavBtn><svg width="7" height="7" fill="#666"><path d="M0 0h1.300v7H0zM6.500 0v7L2 3.500z" /></svg></NavBtn>
            <NavBtn><svg width="5" height="7" fill="#666"><path d="M4.500 0v7L0 3.500z" /></svg></NavBtn>
            <NavBtn><svg width="5" height="7" fill="#666"><path d="M0 0v7l4.500-3.500z" /></svg></NavBtn>
            <NavBtn><svg width="7" height="7" fill="#666"><path d="M5.500 0h1.300v7H5.500zM0 0v7l4.500-3.500z" /></svg></NavBtn>
            <ModelTab>模型</ModelTab>
            <Gap $w={3.500} />
            <LayoutTab>布局1</LayoutTab>
            <TabSlash />
            <Gap $w={2} />
            <LayoutTab>布局2</LayoutTab>
            <TabSlash />
            <Grow />
            <Thumb $w={2} $h={10} />
            <Gap $w={3} />
            <Chevron dir="left" c="#333" />
            <Gap $w={281.500} />
            <Thumb $w={12} $h={10} />
            <Gap $w={2.500} />
            <Chevron dir="right" c="#333" />
            <Gap $w={15} />
          </TabRow>
        </DocWindow>
        <Side $h={402}>
          <SideGrip />
          <SideTools items="erase copyobj mirror offset array move rotate scale stretch trim extend breakpt brk join chamfer fillet blend explode" />
          <SideGrip $h={8} />
          <SideTools items="front backo above under | annot hatchback" />
        </Side>
      </Main>

      <Command>
        <CommandGrip><SideGrip $h={4} /></CommandGrip>
        <CommandBody>
          <CommandText $h={11}><Cjk>命令</Cjk>:</CommandText>
          <CommandText $h={11}><Cjk>命令</Cjk>: _view</CommandText>
          <CommandText $h={14} $input><Cjk>命令</Cjk>:</CommandText>
        </CommandBody>
      </Command>

      <Status>
        <Coords>650.1321,  1225.1343, 0.0000</Coords>
        {STATUS.map((n, i) => <Toggle key={n} $on={STATUS_ON.includes(i)}><Icon n={n} s={13} /></Toggle>)}
        <Grow />
        <Toggle $w={21}>模型</Toggle>
        <Toggle $w={16}><Icon n="pModel" s={12} /></Toggle>
        <Toggle $w={16}><Icon n="pLayout" s={12} /></Toggle>
        <Gap $w={13} />
        <Toggle $w={40}><Icon n="ascale" s={12} />&nbsp;1:1&nbsp;<Caret /></Toggle>
        <Toggle $w={16}><Icon n="ascaleSun" s={12} /></Toggle>
        <Toggle $w={16}><Icon n="ascale" s={12} /></Toggle>
        <Gap $w={4} />
        <Toggle $w={17}><Icon n="gear" s={13} /></Toggle>
        <Toggle $w={16}><Icon n="ulock" s={12} /></Toggle>
        <Toggle $w={16}><Icon n="hw" s={12} /></Toggle>
        <Toggle $w={19}><Icon n="bulb" s={13} /></Toggle>
        <Gap $w={4} />
        <Slot $w={8}><Caret $c="#111" /></Slot>
        <Toggle $w={15}><Icon n="clean" s={12} /></Toggle>
        <Gap $w={2} />
      </Status>

      <Taskbar>
        <Start>
          <svg width="13" height="13" fill="#fff"><path d="M0 1.800 5.500 1v5H0zM6.300.900 13 0v6H6.300zM0 6.800h5.500v5L0 11zM6.300 6.800H13V13l-6.700-.9z" /></svg>
        </Start>
        <TaskSearch>
          <svg width="16" height="16"><circle cx="8" cy="8" r="6.700" fill="none" stroke="#111" strokeWidth="2" /></svg>
          <TaskText>在这里输入你要搜索的内容</TaskText>
          <svg width="10" height="14" fill="none" stroke="#444"><rect x="3" y="1" width="4" height="7.500" rx="2" /><path d="M1.500 6v1.500a3.500 3.500 0 0 0 7 0V6M5 11v2.500" /></svg>
        </TaskSearch>
        <TaskApp $w={29} $ml={5}>
          <svg width="18" height="18"><path d="M1 7h16v10.500H1z" fill="#fff" /><path d="M.500 2.500 16 .5l.5 3.500L1 6z" fill="#fff" /><path d="m4 1.800 1.500 3.500M8 1.300 9.500 5M12 .800l1.500 3.500" stroke="#04151b" strokeWidth="1.500" /></svg>
        </TaskApp>
        <TaskApp $w={29} $ml={7}>
          <svg width="16" height="16" viewBox="0 0 17 17"><path d="M1 7.500C1.500 3 4.500.8 8.500.8c4.500 0 7 3 7 7.200v1.500H5.500c.2 2.500 2.200 3.500 4.500 3.500 1.700 0 3.200-.4 4.500-1.200v3.400c-1.500.8-3.300 1.200-5 1.200C5 16.400 2 13.800 2 10.200 2 7.500 3.500 5.500 6 4.500 3.500 5 2 6 1 7.500zm4.600-.8h5.600c0-1.800-1-2.900-2.700-2.900-1.600 0-2.700 1.200-2.900 2.900z" fill="#0f78d8" /></svg>
        </TaskApp>
        <TaskApp $w={35} $ml={4} $on>
          <svg width="18" height="18"><path d="M1 10h16v7H1z" fill="#e4e4e4" /><path d="M8 11h9v5H8z" fill="#8d8d8d" /><path d="M12 2h5v8h-5z" fill="#777" /><path d="M6.500.5h3L14 11l-3 1-1-2-4 1-2 3-2.500-1z" fill="#e0222a" /><path d="M6.500.5 1.500 13 4 14l3.500-9z" fill="#9a1218" /></svg>
        </TaskApp>
        <TaskApp $w={29} $ml={4}>
          <svg width="18" height="18"><path d="M1 11C0 6 5 3 9.500 3.500c5 .5 6.500 5 5.500 8-.5 2-3 1-4 2.500s.5 3-2.500 3C4.500 17 1.500 14.500 1 11z" fill="#d9ebf5" stroke="#7eaccb" strokeWidth=".8" /><circle cx="4" cy="10" r="1.500" fill="#e1562e" /><circle cx="7" cy="6.500" r="1.500" fill="#62a744" /><circle cx="11.500" cy="7.500" r="1.500" fill="#e7b02e" /><circle cx="6.500" cy="13.500" r="1.500" fill="#3a7cc0" /><path d="M15.500.5 12 17" stroke="#c48a43" strokeWidth="1.800" /></svg>
        </TaskApp>
        <Grow />
        <Tray>
          <Chevron dir="up" c="#fff" s={10} />
          <svg width="13" height="12" fill="none" stroke="#fff"><path d="M4 4.500h7.500v5H4zM12.500 6v2M1 2h3v2H1zM2.500 4v3" /><path d="M5.500 6h5v2h-5z" fill="#fff" stroke="none" /></svg>
          <svg width="12" height="12" fill="none" stroke="#fff"><path d="M10.500 1.500a9 9 0 0 0-9 9M10.500 4.500a6 6 0 0 0-6 6M10.500 7.500a3 3 0 0 0-3 3" /><circle cx="10" cy="10" r="1" fill="#fff" stroke="none" /></svg>
          <svg width="13" height="12" fill="none" stroke="#fff"><path d="M1 4.500h2L5.500 2v8L3 7.500H1zM7.500 4.500q1 1.500 0 3M9.500 3q2 3 0 6M11 1.500q3 4.500 0 9" /></svg>
          <Gap $w={1} />
          <svg width="11" height="11"><rect width="11" height="11" rx="1.500" fill="#21b321" /><path d="M8.500 2.500H4.300Q2.500 2.700 3 4.500c.5 1.500 5 .500 5 2.500 0 1.200-1 1.500-2 1.500H2.500" fill="none" stroke="#fff" strokeWidth="1.800" /></svg>
        </Tray>
        <Clock>11:49<br />2019/1/10</Clock>
      </Taskbar>

      <FloatBar>
        <Grip $w={5} />
        <Slot $w={18} $on><Icon n="named" /></Slot>
        <Tools s={13.500} items="| vtop vbottom vleft vright vfront vback | sw se ne nw | camera | orbit" />
        <Combo $w={102} $off><Grow /><Chevron c="#aaa" /></Combo>
        <FloatClose><svg width="6" height="6" stroke="#fff" strokeWidth="1.200"><path d="M1 1l4 4M5 1l-4 4" /></svg></FloatClose>
      </FloatBar>
      <Tip>
        <TipLine $h={10} $bold>命名视图...</TipLine>
        <TipLine $h={23}>按名称保存和恢复视图</TipLine>
        <TipRule />
        <TipLine $h={12} $bold $s={9.300}>
          <svg width="11.500" height="11.500"><path d="M0 0h10v7H0z" fill="#f3efa2" /><path d="M0 0h10v1.500H0z" fill="#2745b5" /><path d="M1 7h10.500v4H1z" fill="#111" /></svg>
          VIEW
        </TipLine>
        <TipLine $h={23} $bold $s={8.850}>按 F1 键获得更多帮助</TipLine>
      </Tip>
      <InkOverlay width="1000" height="562" fill="none" stroke="#850a1d" strokeWidth="3.600" strokeLinecap="round" strokeLinejoin="round">
        <path d="M632 348 330 294 97 253l47-10M101 254l17 28" />
      </InkOverlay>

      <Mark>
        <Overlay width="184" height="92" fill="rgba(255,255,255,.78)" stroke="rgba(170,170,170,.6)">
          <ellipse cx="69.500" cy="21.700" rx="6.300" ry="8.300" />
          <ellipse cx="81.700" cy="9.500" rx="6.300" ry="8.300" />
          <ellipse cx="97.700" cy="10" rx="6.300" ry="8.300" />
          <ellipse cx="107.500" cy="26" rx="6.300" ry="8.300" />
          <path d="M88.500 24c7 0 9 8 15 13 6 4 8 9 6.500 14-2.500 6-11 5.500-21.500 5.500S70 57 67.500 51C66 46 68 41 74 37c6-5 7.500-13 14.500-13z" />
        </Overlay>
        <MarkText $x={1} $y={20.500} $s={40} $ls={-1}>Bai</MarkText>
        <MarkText $x={74} $y={31} $s={23} $dark>du</MarkText>
        <MarkText $x={116} $y={26} $s={30}>经验</MarkText>
        <MarkText $x={2} $y={61.500} $s={20} $ls={-.1}>jingyan.baidu.com</MarkText>
      </Mark>
    </Screen>
  );
}
